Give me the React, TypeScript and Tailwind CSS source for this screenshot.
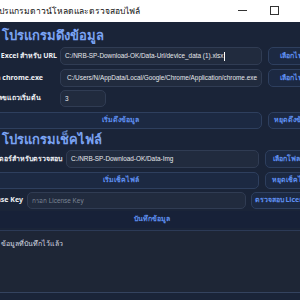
import React from "react";

const F = { fontFamily: '"Noto Sans", "Liberation Sans", sans-serif' };

function Btn({ children, className = "" }: { children: React.ReactNode; className?: string }) {
  return (
    <div
      className={
        "shrink-0 h-full flex items-center justify-center rounded-[5px] border border-[#2e3f5e] bg-[#1c2942] text-[7px] font-bold text-[#5f8ff0] whitespace-nowrap overflow-hidden " +
        className
      }
    >
      {children}
    </div>
  );
}

function Input({ children, className = "", muted = false }: { children?: React.ReactNode; className?: string; muted?: boolean }) {
  return (
    <div
      className={
        "shrink-0 h-full flex items-center rounded-[5px] border border-[#303c53] bg-[#212b3e] px-[4px] text-[6.4px] whitespace-nowrap overflow-hidden " +
        (muted ? "text-[#7b8494] " : "text-[#e6e8ec] ") +
        className
      }
      style={{ fontFamily: '"Liberation Sans", "Noto Sans", sans-serif' }}
    >
      {children}
    </div>
  );
}

function Label({ children, w }: { children: React.ReactNode; w: string }) {
  return (
    <div className={"shrink-0 h-full flex items-center justify-end whitespace-nowrap text-[7px] font-bold text-[#eef0f4] " + w}>
      {children}
    </div>
  );
}

export default function App() {
  return (
    <div className="w-[300px] h-[300px] overflow-hidden bg-[#1a2438] relative" style={F}>
      {/* title bar */}
      <div className="h-[22px] bg-white flex items-center relative">
        <span className="ml-[-6px] text-[8.5px] text-[#111] whitespace-nowrap">โปรแกรมดาวน์โหลดและตรวจสอบไฟล์</span>
        <div className="absolute left-[238px] top-[10px] w-[9px] h-px bg-[#333]" />
        <div className="absolute left-[270px] top-[6px] w-[9px] h-[9px] border border-[#333]" />
      </div>

      {/* watermark */}
      <div className="absolute left-[160px] top-[117px] text-[30px] font-bold text-white/[0.02] whitespace-nowrap pointer-events-none">
        Our Heart
      </div>

      <div className="flex flex-col">
        {/* heading 1 */}
        <div className="mt-[4px] h-[20px] flex items-center pl-[2px] text-[13px] font-bold text-[#7aa3f3] whitespace-nowrap">
          โปรแกรมดึงข้อมูล
        </div>

        <div className="mt-[1px] h-[18px] flex items-center">
          <Label w="w-[57px]">ไฟล์ Excel สำหรับ URL</Label>
          <Input className="ml-[3px] w-[202px]">
            C:/NRB-SP-Download-OK/Data-Url/device_data (1).xlsx<span className="inline-block w-px h-[9px] bg-white ml-px" />
          </Input>
          <Btn className="ml-[6px] w-[50px]">เลือกไฟล์</Btn>
        </div>

        <div className="mt-[4px] h-[18px] flex items-center">
          <Label w="w-[43px]">Path chrome.exe</Label>
          <Input className="ml-[17px] w-[202px] justify-end">
            C:/Users/N/AppData/Local/Google/Chrome/Application/chrome.exe
          </Input>
          <Btn className="ml-[6px] w-[50px]">เลือกไฟล์</Btn>
        </div>

        <div className="mt-[3px] h-[17px] flex items-center">
          <Label w="w-[41px]">เลขแถวเริ่มต้น</Label>
          <Input className="ml-[19px] w-[46px]">3</Input>
        </div>

        <div className="mt-[5px] h-[17px] flex items-center">
          <Btn className="ml-[-22px] w-[284px]">เริ่มดึงข้อมูล</Btn>
          <Btn className="ml-[6px] w-[52px]">หยุดดึงข้อมูล</Btn>
        </div>

        {/* heading 2 */}
        <div className="mt-[1px] h-[20px] flex items-center pl-[2px] text-[13px] font-bold text-[#7aa3f3] whitespace-nowrap">
          โปรแกรมเช็คไฟล์
        </div>

        <div className="h-[18px] flex items-center">
          <Label w="w-[62px]">โฟลเดอร์สำหรับตรวจสอบ</Label>
          <Input className="ml-[4px] w-[193px]">C:/NRB-SP-Download-OK/Data-Img</Input>
          <Btn className="ml-[6px] w-[58px]">เลือกโฟลเดอร์</Btn>
        </div>

        <div className="mt-[4px] h-[17px] flex items-center">
          <Btn className="ml-[-17px] w-[276px]">เริ่มเช็คไฟล์</Btn>
          <Btn className="ml-[6px] w-[52px]">หยุดเช็คไฟล์</Btn>
        </div>

        <div className="mt-[3px] h-[17px] flex items-center">
          <Label w="w-[23px]">License Key</Label>
          <Input muted className="ml-[4px] w-[219px]">กรอก License Key</Input>
          <Btn className="ml-[5px] w-[64px]">ตรวจสอบ License</Btn>
        </div>

        <div className="mt-[2px] h-[17px] flex items-center justify-center bg-[#172138] text-[7px] font-bold text-[#5f8ff0]">
          <span className="ml-[4px]">บันทึกข้อมูล</span>
        </div>

        <div className="mt-[2px] h-[62px] border-t border-[#2c3a56] bg-[#1e2636] pt-[8px] pl-[1px] text-[7px] text-[#d4d8e0] whitespace-nowrap">
          ข้อมูลที่บันทึกไว้แล้ว
        </div>
        <div className="h-px bg-[#34435f]" />
      </div>
    </div>
  );
}
